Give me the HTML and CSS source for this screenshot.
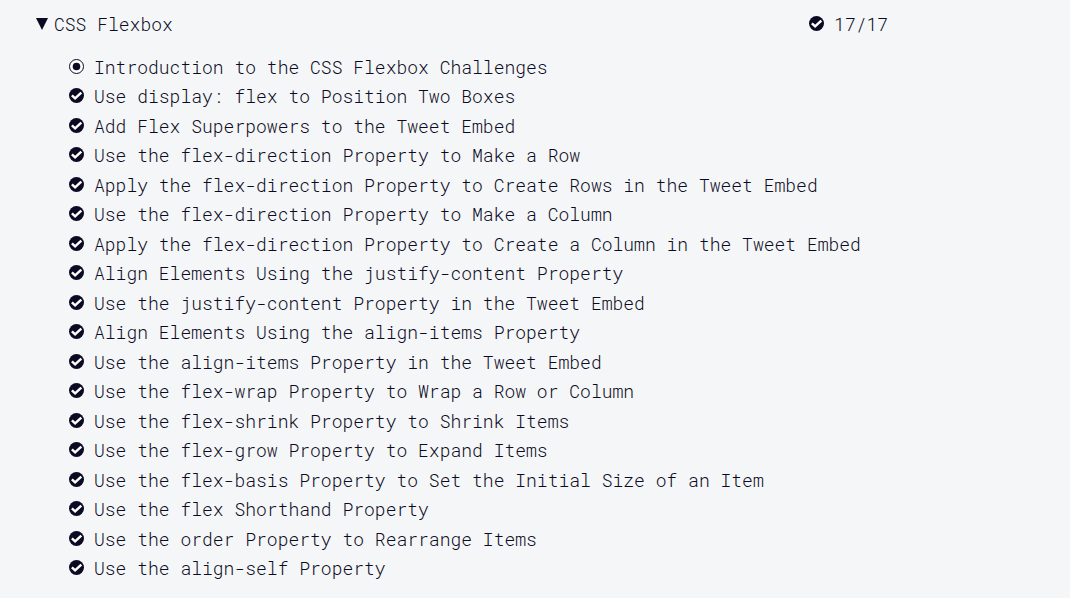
FILE: index.html
```html
<!DOCTYPE html>
<html lang="en">
<head>
<meta charset="utf-8">
<meta name="viewport" content="width=device-width, initial-scale=1">
<title>CSS Flexbox</title>
<link rel="stylesheet" href="styles.css">
</head>
<body>
<svg width="0" height="0" class="sprite" aria-hidden="true">
  <symbol id="done" viewBox="0 0 15 15">
    <circle cx="7.5" cy="7.5" r="7.5" fill="#0a0a23"/>
    <path d="M2.9 7.4 L6.1 10.4 L12.3 4.6" fill="none" stroke="#fff" stroke-width="2.5"/>
  </symbol>
  <symbol id="intro" viewBox="0 0 15 15">
    <circle cx="7.5" cy="7.5" r="7" fill="#fff" stroke="#0a0a23"/>
    <circle cx="7.5" cy="7.5" r="3.8" fill="#0a0a23"/>
  </symbol>
</svg>
<main class="block">
  <button class="block-header" type="button" aria-expanded="true" aria-controls="challenges">
    <svg class="caret" viewBox="0 0 12 12" aria-hidden="true"><path d="M0 0H12L6 12Z" fill="#0a0a23"/></svg>
    <span class="block-title">CSS Flexbox</span>
    <span class="progress"><svg class="icon" aria-hidden="true"><use href="#done"/></svg><span>17/17</span></span>
  </button>
  <ul class="challenges" id="challenges">
    <li><a class="challenge" href="#"><svg class="icon" aria-hidden="true"><use href="#intro"/></svg><span>Introduction to the CSS Flexbox Challenges</span></a></li>
    <li><a class="challenge" href="#"><svg class="icon" aria-hidden="true"><use href="#done"/></svg><span>Use display: flex to Position Two Boxes</span></a></li>
    <li><a class="challenge" href="#"><svg class="icon" aria-hidden="true"><use href="#done"/></svg><span>Add Flex Superpowers to the Tweet Embed</span></a></li>
    <li><a class="challenge" href="#"><svg class="icon" aria-hidden="true"><use href="#done"/></svg><span>Use the flex-direction Property to Make a Row</span></a></li>
    <li><a class="challenge" href="#"><svg class="icon" aria-hidden="true"><use href="#done"/></svg><span>Apply the flex-direction Property to Create Rows in the Tweet Embed</span></a></li>
    <li><a class="challenge" href="#"><svg class="icon" aria-hidden="true"><use href="#done"/></svg><span>Use the flex-direction Property to Make a Column</span></a></li>
    <li><a class="challenge" href="#"><svg class="icon" aria-hidden="true"><use href="#done"/></svg><span>Apply the flex-direction Property to Create a Column in the Tweet Embed</span></a></li>
    <li><a class="challenge" href="#"><svg class="icon" aria-hidden="true"><use href="#done"/></svg><span>Align Elements Using the justify-content Property</span></a></li>
    <li><a class="challenge" href="#"><svg class="icon" aria-hidden="true"><use href="#done"/></svg><span>Use the justify-content Property in the Tweet Embed</span></a></li>
    <li><a class="challenge" href="#"><svg class="icon" aria-hidden="true"><use href="#done"/></svg><span>Align Elements Using the align-items Property</span></a></li>
    <li><a class="challenge" href="#"><svg class="icon" aria-hidden="true"><use href="#done"/></svg><span>Use the align-items Property in the Tweet Embed</span></a></li>
    <li><a class="challenge" href="#"><svg class="icon" aria-hidden="true"><use href="#done"/></svg><span>Use the flex-wrap Property to Wrap a Row or Column</span></a></li>
    <li><a class="challenge" href="#"><svg class="icon" aria-hidden="true"><use href="#done"/></svg><span>Use the flex-shrink Property to Shrink Items</span></a></li>
    <li><a class="challenge" href="#"><svg class="icon" aria-hidden="true"><use href="#done"/></svg><span>Use the flex-grow Property to Expand Items</span></a></li>
    <li><a class="challenge" href="#"><svg class="icon" aria-hidden="true"><use href="#done"/></svg><span>Use the flex-basis Property to Set the Initial Size of an Item</span></a></li>
    <li><a class="challenge" href="#"><svg class="icon" aria-hidden="true"><use href="#done"/></svg><span>Use the flex Shorthand Property</span></a></li>
    <li><a class="challenge" href="#"><svg class="icon" aria-hidden="true"><use href="#done"/></svg><span>Use the order Property to Rearrange Items</span></a></li>
    <li><a class="challenge" href="#"><svg class="icon" aria-hidden="true"><use href="#done"/></svg><span>Use the align-self Property</span></a></li>
  </ul>
</main>
</body>
</html>
```

FILE: styles.css
```css
* {
  box-sizing: border-box;
}

body {
  margin: 0;
  background: #f5f6f7;
  color: #0a0a23;
  font-family: "Roboto Mono", "Liberation Mono", monospace;
  font-size: 18px;
  font-weight: 300;
  line-height: 29px;
}

.sprite {
  position: absolute;
}

.block {
  padding: 10px 17% 14px 36px;
}

.block-header {
  display: flex;
  align-items: center;
  gap: 6px;
  width: 100%;
  margin: 0 0 14px;
  padding: 0;
  border: 0;
  background: none;
  color: inherit;
  font: inherit;
  text-align: left;
}

.caret {
  flex: none;
  width: 12px;
  height: 12px;
  margin-bottom: 2px;
}

.progress {
  display: flex;
  align-items: center;
  gap: 10px;
  margin-left: auto;
}

.icon {
  flex: none;
  width: 15px;
  height: 15px;
  margin-bottom: 2px;
}

.challenges {
  margin: 0;
  padding: 0 0 0 33px;
  list-style: none;
}

.challenges li:nth-child(even) {
  margin-bottom: 1px;
}

.challenge {
  display: flex;
  align-items: center;
  gap: 10px;
  color: inherit;
  text-decoration: none;
}
```
